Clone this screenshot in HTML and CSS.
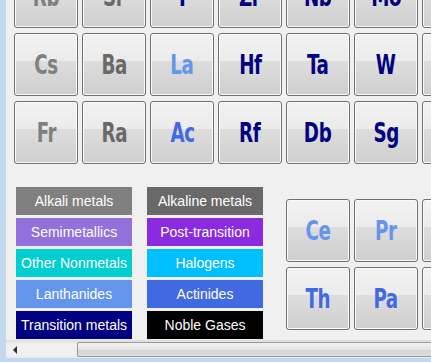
FILE: index.html
```html
<!DOCTYPE html>
<html lang="en">
<head>
    <meta charset="UTF-8">
    <title>Periodic Table</title>
    <link rel="stylesheet" href="styles.css">
</head>
<body>
    <div class="window">
        <div class="panel">
            <div class="table">
                <div class="tile alkali"><span>Rb</span></div>
                <div class="tile alkaline"><span>Sr</span></div>
                <div class="tile transition"><span>Y</span></div>
                <div class="tile transition"><span>Zr</span></div>
                <div class="tile transition"><span>Nb</span></div>
                <div class="tile transition"><span>Mo</span></div>
                <div class="tile transition"><span>Tc</span></div>

                <div class="tile alkali"><span>Cs</span></div>
                <div class="tile alkaline"><span>Ba</span></div>
                <div class="tile lanthanide"><span>La</span></div>
                <div class="tile transition"><span>Hf</span></div>
                <div class="tile transition"><span>Ta</span></div>
                <div class="tile transition"><span>W</span></div>
                <div class="tile transition"><span>Re</span></div>

                <div class="tile alkali"><span>Fr</span></div>
                <div class="tile alkaline"><span>Ra</span></div>
                <div class="tile actinide"><span>Ac</span></div>
                <div class="tile transition"><span>Rf</span></div>
                <div class="tile transition"><span>Db</span></div>
                <div class="tile transition"><span>Sg</span></div>
                <div class="tile transition"><span>Bh</span></div>
            </div>

            <div class="lower">
                <div class="legend">
                    <div class="key bg-alkali">Alkali metals</div>
                    <div class="key bg-alkaline">Alkaline metals</div>
                    <div class="key bg-semi">Semimetallics</div>
                    <div class="key bg-post">Post-transition</div>
                    <div class="key bg-nonmetal">Other Nonmetals</div>
                    <div class="key bg-halogen">Halogens</div>
                    <div class="key bg-lanthanide">Lanthanides</div>
                    <div class="key bg-actinide">Actinides</div>
                    <div class="key bg-transition">Transition metals</div>
                    <div class="key bg-noble">Noble Gases</div>
                </div>

                <div class="series">
                    <div class="tile lanthanide"><span>Ce</span></div>
                    <div class="tile lanthanide"><span>Pr</span></div>
                    <div class="tile lanthanide"><span>Nd</span></div>
                    <div class="tile actinide"><span>Th</span></div>
                    <div class="tile actinide"><span>Pa</span></div>
                    <div class="tile actinide"><span>U</span></div>
                </div>
            </div>
        </div>

        <div class="hscroll">
            <div class="arrow"></div>
            <div class="thumb"></div>
        </div>
    </div>
</body>
</html>
```

FILE: styles.css
```css
body {
    margin: 0;
    background-color: #c3d7ee;
    overflow: hidden;
}
.window {
    width: 425px;
    height: 358px;
    margin-left: 6px;
    background-color: #f0f0f0;
    display: flex;
    flex-direction: column;
    overflow: hidden;
}
.panel {
    height: 340px;
    overflow: hidden;
    flex-shrink: 0;
}
.table {
    display: grid;
    grid-template-columns: repeat(7, 64px);
    grid-auto-rows: 63px;
    column-gap: 4px;
    row-gap: 5px;
    margin-top: -35px;
    padding-left: 8px;
}
.tile {
    box-sizing: border-box;
    width: 64px;
    height: 63px;
    border: 1px solid #707070;
    border-radius: 3px;
    box-shadow: inset 0 0 0 1px #fbfbfb;
    background: linear-gradient(
        to bottom,
        #f2f2f2 0%,
        #ebebeb 45%,
        #dddddd 45%,
        #cfcfcf 100%
    );
    display: flex;
    align-items: center;
    justify-content: center;
    font-family: Impact, "DejaVu Sans Condensed", "Liberation Sans Narrow", sans-serif;
    font-weight: bold;
    font-size: 26px;
}
.tile span {
    display: inline-block;
    transform: scaleX(0.78);
    letter-spacing: -0.5px;
}
.alkali { color: #808080; }
.alkaline { color: #696969; }
.lanthanide { color: #6495ed; }
.actinide { color: #4169e1; }
.transition { color: #000080; }

.lower {
    display: flex;
    align-items: flex-start;
    padding-left: 10px;
    margin-top: 23px;
}
.legend {
    display: grid;
    grid-template-columns: 116px 116px;
    grid-auto-rows: 28px;
    column-gap: 15px;
    row-gap: 3px;
}
.key {
    display: flex;
    align-items: center;
    justify-content: center;
    color: white;
    font-family: "Liberation Sans", Arial, sans-serif;
    font-size: 14px;
    white-space: nowrap;
}
.bg-alkali { background-color: #808080; }
.bg-alkaline { background-color: #696969; }
.bg-semi { background-color: #9370db; }
.bg-post { background-color: #8a2be2; }
.bg-nonmetal { background-color: #00ced1; }
.bg-halogen { background-color: #00bfff; }
.bg-lanthanide { background-color: #6495ed; }
.bg-actinide { background-color: #4169e1; }
.bg-transition { background-color: #000080; }
.bg-noble { background-color: #000000; }

.series {
    display: grid;
    grid-template-columns: repeat(3, 64px);
    grid-auto-rows: 63px;
    column-gap: 4px;
    row-gap: 5px;
    margin-left: 23px;
    margin-top: 12px;
}

.hscroll {
    height: 18px;
    display: flex;
    align-items: center;
    background: linear-gradient(to bottom, #e3e3e3 0%, #f0f0f0 20%, #f0f0f0 80%, #e8e8e8 100%);
    border-top: 1px solid #dcdcdc;
    box-sizing: border-box;
}
.arrow {
    width: 0;
    height: 0;
    border-top: 4px solid transparent;
    border-bottom: 4px solid transparent;
    border-right: 4px solid #303030;
    margin-left: 7px;
    margin-right: 60px;
}
.thumb {
    flex: 1;
    height: 15px;
    margin-right: -10px;
    border: 1px solid #979797;
    border-radius: 2px;
    box-sizing: border-box;
    background: linear-gradient(to bottom, #f2f2f2 0%, #e4e4e4 50%, #d6d6d6 51%, #dcdcdc 100%);
}
```
